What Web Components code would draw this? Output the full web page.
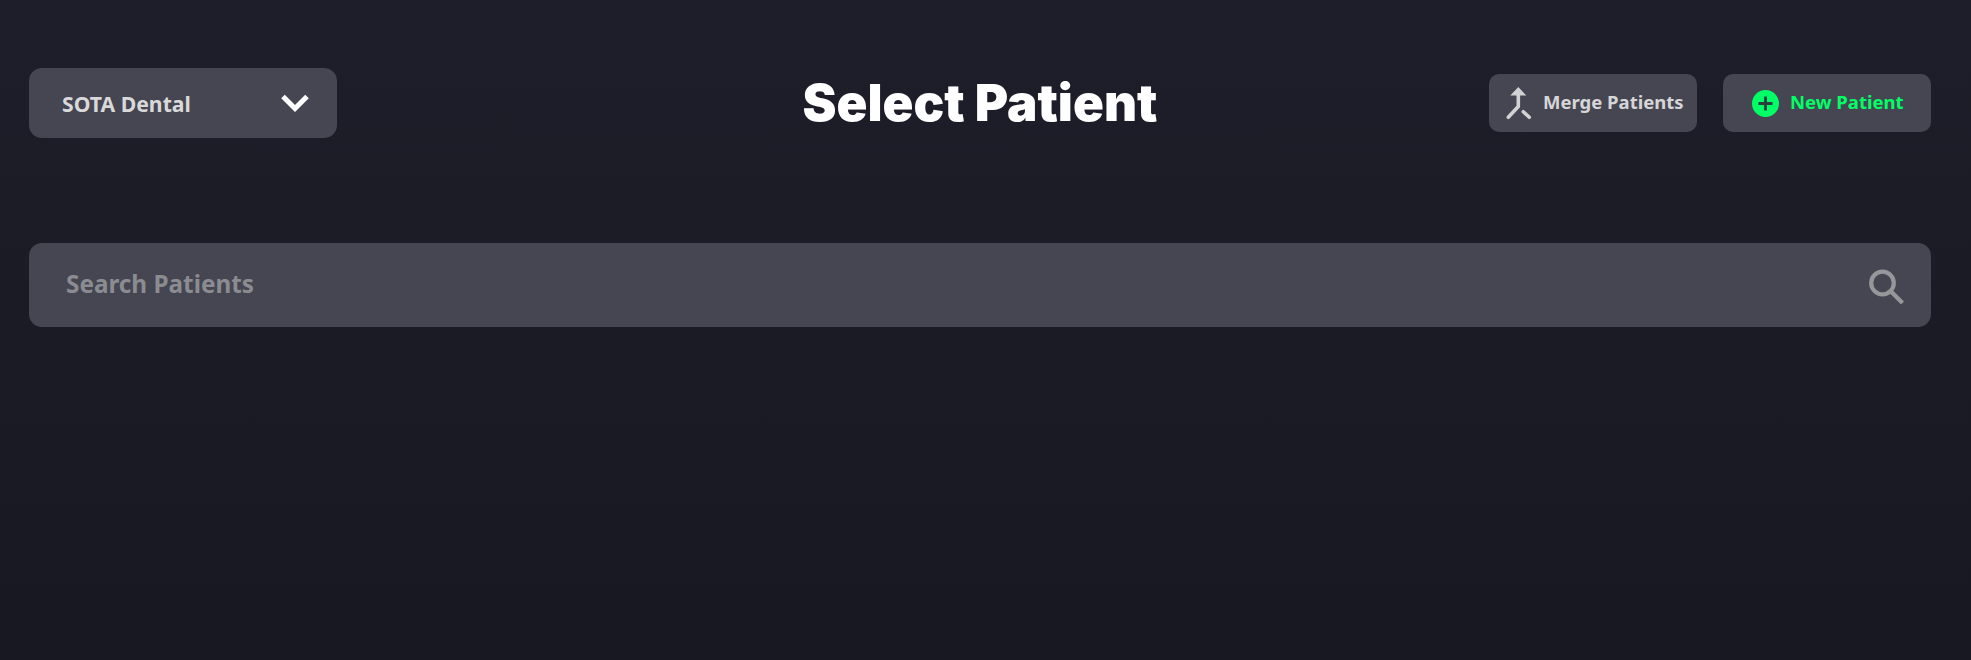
<!DOCTYPE html>
<html lang="en">
<head>
<meta charset="utf-8">
<title>Select Patient</title>
<style>
  html, body { height: 100%; }
  body {
    margin: 0;
    background: linear-gradient(#1d1e29, #171821);
    font-family: "Noto Sans", "Open Sans", sans-serif;
  }
</style>
</head>
<body>
<select-patient-page>
  <practice-select>SOTA Dental</practice-select>
  <span slot="title">Select Patient</span>
  <action-button slot="actions" icon="merge">Merge Patients</action-button>
  <action-button slot="actions" icon="add" accent>New Patient</action-button>
  <patient-search placeholder="Search Patients"></patient-search>
</select-patient-page>

<script>
const ICONS = {
  merge: `<svg width="26" height="34" viewBox="0 0 26 34" fill="none" stroke="#d2d2d4" stroke-width="3.600" stroke-linecap="round">
      <path fill="#d2d2d4" stroke="none" d="M12.300 1 L20.300 9.500 L4.300 9.500 Z"/>
      <path d="M12.300 9 V20.500 L2.300 31.300"/>
      <path d="M17.300 25.700 L23.300 31.300"/>
    </svg>`,
  add: `<svg width="27" height="27" viewBox="0 0 27 27">
      <circle cx="13.500" cy="13.500" r="13.500" fill="#00ff66"/>
      <path d="M13.500 6.500 V20.500 M6.500 13.500 H20.500" stroke="#2d3d3f" stroke-width="2.800"/>
    </svg>`
};

class SelectPatientPage extends HTMLElement {
  constructor() {
    super();
    this.attachShadow({ mode: "open" });
  }

  connectedCallback() {
    this.shadowRoot.innerHTML = `
      <style>
        :host {
          display: block;
          padding: 68px 40px 0 29px;
        }
        header {
          display: grid;
          grid-template-columns: 1fr auto 1fr;
          align-items: center;
          height: 70px;
        }
        h1 {
          margin: 0;
          color: #fff;
          font: 900 51px/70px Inter, sans-serif;
          letter-spacing: 0;
        }
        .actions {
          display: flex;
          justify-content: flex-end;
          gap: 26px;
        }
        .search {
          margin-top: 105px;
        }
      </style>
      <header>
        <div><slot></slot></div>
        <h1><slot name="title"></slot></h1>
        <div class="actions"><slot name="actions"></slot></div>
      </header>
      <div class="search"><slot name="search"></slot></div>
    `;
    this.querySelector("patient-search").slot = "search";
  }
}

class PracticeSelect extends HTMLElement {
  constructor() {
    super();
    this.attachShadow({ mode: "open" });
  }

  connectedCallback() {
    this.shadowRoot.innerHTML = `
      <style>
        :host {
          display: flex;
          align-items: center;
          justify-content: space-between;
          box-sizing: border-box;
          width: 308px;
          height: 70px;
          padding: 0 28px 0 33px;
          border-radius: 13px;
          background: #454651;
          color: #d9d9da;
          font-weight: 700;
          font-size: 21.200px;
        }
        svg { display: block; }
      </style>
      <slot></slot>
      <svg width="28" height="18" viewBox="0 0 28 18" fill="none" stroke="#fff" stroke-width="5">
        <path d="M2 2.500 L14 14.500 L26 2.500"/>
      </svg>
    `;
  }
}

class ActionButton extends HTMLElement {
  constructor() {
    super();
    this.attachShadow({ mode: "open" });
  }

  connectedCallback() {
    this.shadowRoot.innerHTML = `
      <style>
        :host {
          display: flex;
          align-items: center;
          box-sizing: border-box;
          width: 208px;
          height: 58px;
          padding-left: 17px;
          gap: 11px;
          border-radius: 10px;
          background: #454651;
          color: #d6d6d8;
          font-weight: 700;
          font-size: 18.500px;
          white-space: nowrap;
        }
        :host([accent]) {
          padding-left: 29px;
          color: #00ff66;
        }
        svg { display: block; flex: none; }
        .label { margin-bottom: 4px; }
      </style>
      ${ICONS[this.getAttribute("icon")]}
      <span class="label"><slot></slot></span>
    `;
  }
}

class PatientSearch extends HTMLElement {
  constructor() {
    super();
    this.attachShadow({ mode: "open" });
  }

  connectedCallback() {
    const placeholder = this.getAttribute("placeholder");
    this.shadowRoot.innerHTML = `
      <style>
        :host {
          display: flex;
          align-items: center;
          box-sizing: border-box;
          height: 84px;
          padding: 0 26px 0 37px;
          border-radius: 13px;
          background: #454651;
        }
        input {
          flex: 1;
          min-width: 0;
          margin-bottom: 4px;
          padding: 0;
          border: 0;
          outline: 0;
          background: none;
          color: #fff;
          font: 700 24.300px "Noto Sans", "Open Sans", sans-serif;
        }
        input::placeholder {
          color: #8b8c92;
          opacity: 1;
        }
        svg { display: block; }
      </style>
      <input type="text" placeholder="${placeholder}">
      <svg width="36" height="38" viewBox="0 0 36 38" fill="none" stroke="#96979b" stroke-width="4.200">
        <circle cx="13.500" cy="17" r="11.300"/>
        <path d="M22 25.500 L33.500 37"/>
      </svg>
    `;
  }
}

customElements.define("practice-select", PracticeSelect);
customElements.define("action-button", ActionButton);
customElements.define("patient-search", PatientSearch);
customElements.define("select-patient-page", SelectPatientPage);
</script>
</body>
</html>
